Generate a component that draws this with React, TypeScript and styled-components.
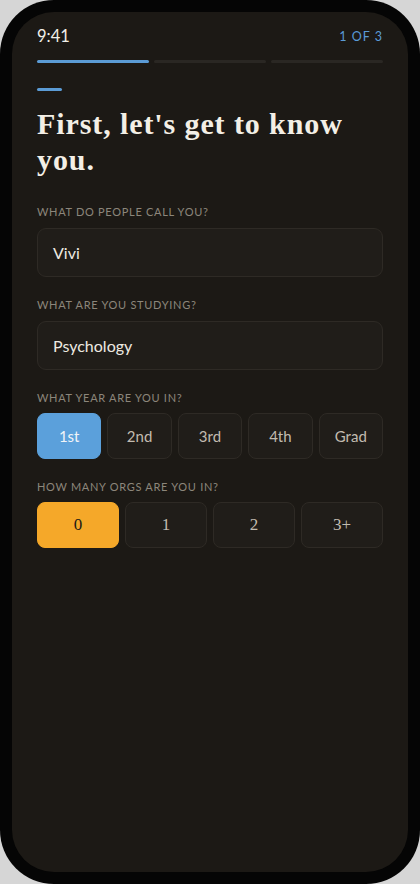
import React, { FunctionComponent, useState } from 'react';
import styled, { createGlobalStyle } from 'styled-components';

const Global = createGlobalStyle`
  html, body {
    margin: 0;
    padding: 0;
    background: #d6d6d6;
  }
  * {
    box-sizing: border-box;
  }
`;

const SANS = `'Lato', 'Noto Sans', sans-serif`;
const SERIF = `'Liberation Serif', 'DejaVu Serif', serif`;

const Frame_ = styled.div`
  background: #050505;
  border-radius: 54px;
  height: 884px;
  padding: 12px;
  width: 420px;
`;

const Screen_ = styled.div`
  background: #1c1915;
  border-radius: 42px;
  display: flex;
  flex-direction: column;
  height: 100%;
  overflow: hidden;
  padding: 14px 25px 0;
`;

const StatusBar_ = styled.div`
  align-items: center;
  display: flex;
  height: 20px;
  justify-content: space-between;
`;

const Clock_ = styled.span`
  color: #f1eee8;
  font-family: ${SANS};
  font-size: 16.5px;
  font-weight: 400;
`;

const StepCount_ = styled.span`
  color: #5b9bd5;
  font-family: ${SANS};
  font-size: 12.5px;
  letter-spacing: 1px;
`;

const Progress_ = styled.div`
  display: grid;
  gap: 5px;
  grid-template-columns: repeat(3, 1fr);
  margin-top: 14px;
`;

const Segment_ = styled.div<{ $active: boolean }>`
  background: ${p => (p.$active ? '#5b9bd5' : '#2a2723')};
  border-radius: 2px;
  height: 3px;
`;

const Accent_ = styled.div`
  background: #5b9bd5;
  border-radius: 2px;
  height: 3px;
  margin-top: 25px;
  width: 25px;
`;

const Heading_ = styled.h1`
  color: #f3efe6;
  font-family: ${SERIF};
  font-size: 30px;
  font-weight: 700;
  letter-spacing: 0.9px;
  line-height: 36px;
  margin: 15px 0 0;
`;

const Form_ = styled.div`
  display: flex;
  flex-direction: column;
  gap: 21px;
  margin-top: 27px;
`;

const Field_ = styled.div<{ $gap: number }>`
  display: flex;
  flex-direction: column;
  gap: ${p => p.$gap}px;
`;

const Label_ = styled.div`
  color: #8c867b;
  font-family: ${SANS};
  font-size: 11px;
  letter-spacing: 0.7px;
  line-height: 14px;
  text-transform: uppercase;
`;

const Input_ = styled.div`
  align-items: center;
  background: #201d19;
  border: 1px solid #2e2a25;
  border-radius: 9px;
  color: #eeeae2;
  display: flex;
  font-family: ${SANS};
  font-size: 16px;
  height: 49px;
  padding: 0 15px;
`;

const Choices_ = styled.div<{ $count: number }>`
  display: grid;
  gap: 6px;
  grid-template-columns: repeat(${p => p.$count}, 1fr);
`;

const Choice_ = styled.button<{ $selected: boolean; $accent: string; $serif?: boolean }>`
  align-items: center;
  background: ${p => (p.$selected ? p.$accent : '#201d19')};
  border: 1px solid ${p => (p.$selected ? p.$accent : '#2e2a25')};
  border-radius: 8px;
  color: ${p => (p.$selected ? (p.$serif ? '#1c1a16' : '#f1f4f8') : '#c2bbb0')};
  display: flex;
  font-family: ${p => (p.$serif ? SERIF : SANS)};
  font-size: ${p => (p.$serif ? '17px' : '15px')};
  height: 46px;
  justify-content: center;
  padding: 0;
`;

const years = ['1st', '2nd', '3rd', '4th', 'Grad'];
const orgs = ['0', '1', '2', '3+'];

const App: FunctionComponent = () => {
  const [year, setYear] = useState('1st');
  const [org, setOrg] = useState('0');

  return (
    <>
      <Global />
      <Frame_>
        <Screen_>
          <StatusBar_>
            <Clock_>9:41</Clock_>
            <StepCount_>1 OF 3</StepCount_>
          </StatusBar_>
          <Progress_>
            {[0, 1, 2].map(i => (
              <Segment_ key={`seg-${i}`} $active={i === 0} />
            ))}
          </Progress_>
          <Accent_ />
          <Heading_>First, let's get to know you.</Heading_>
          <Form_>
            <Field_ $gap={9}>
              <Label_>What do people call you?</Label_>
              <Input_>Vivi</Input_>
            </Field_>
            <Field_ $gap={9}>
              <Label_>What are you studying?</Label_>
              <Input_>Psychology</Input_>
            </Field_>
            <Field_ $gap={8}>
              <Label_>What year are you in?</Label_>
              <Choices_ $count={years.length}>
                {years.map(y => (
                  <Choice_ key={y} $selected={y === year} $accent="#5ba0db" onClick={() => setYear(y)}>
                    {y}
                  </Choice_>
                ))}
              </Choices_>
            </Field_>
            <Field_ $gap={8}>
              <Label_>How many orgs are you in?</Label_>
              <Choices_ $count={orgs.length}>
                {orgs.map(o => (
                  <Choice_ key={o} $serif $selected={o === org} $accent="#f5a829" onClick={() => setOrg(o)}>
                    {o}
                  </Choice_>
                ))}
              </Choices_>
            </Field_>
          </Form_>
        </Screen_>
      </Frame_>
    </>
  );
};

export default App;
